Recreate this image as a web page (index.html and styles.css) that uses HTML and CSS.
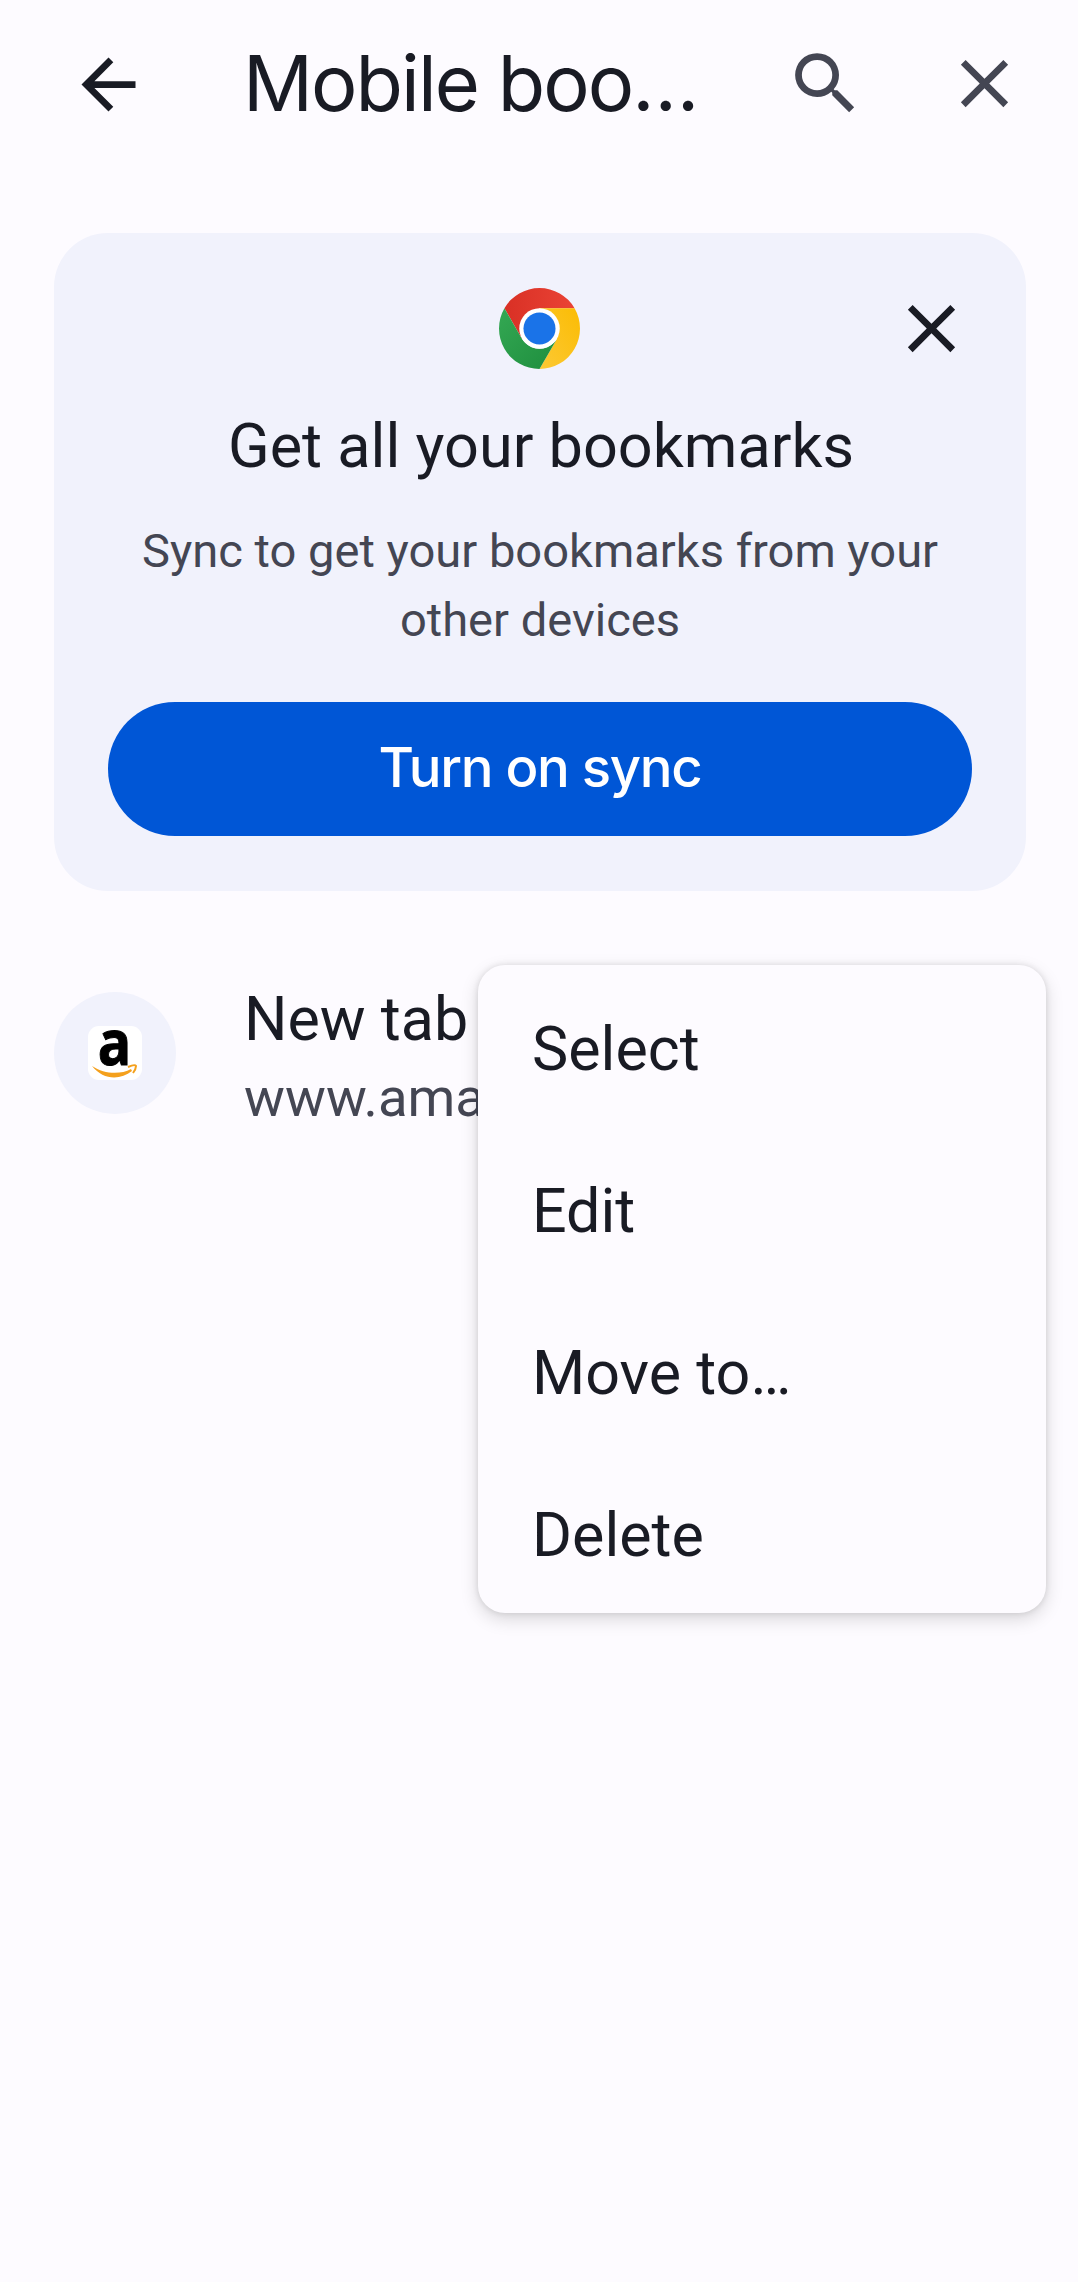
FILE: index.html
```html
<!DOCTYPE html>
<html lang="en">
<head>
<meta charset="utf-8">
<title>Mobile bookmarks</title>
<link rel="stylesheet" href="styles.css">
</head>
<body>
<header class="toolbar">
  <svg class="back" viewBox="0 0 24 24"><path d="M20 11H7.830l5.590-5.590L12 4l-8 8 8 8 1.410-1.410L7.830 13H20z"/></svg>
  <h1>Mobile boo…</h1>
  <svg class="search" viewBox="0 0 24 24"><path d="M15.500 14h-.79l-.28-.27A6.470 6.470 0 0 0 16 9.500A6.500 6.500 0 1 0 9.500 16c1.610 0 3.090-.59 4.230-1.570l.27.28v.79l5 4.990L20.490 19zm-6 0a4.500 4.500 0 1 1 0-9 4.500 4.500 0 0 1 0 9z"/></svg>
  <svg class="close" viewBox="0 0 24 24"><path d="M19 6.410L17.590 5 12 10.590 6.410 5 5 6.410 10.590 12 5 17.590 6.410 19 12 13.410 17.590 19 19 17.590 13.410 12z"/></svg>
</header>
<main>
  <section class="promo">
    <div class="promo-top">
      <svg class="chrome" viewBox="0 0 48 48">
        <defs>
          <linearGradient id="r" x1="0" x2="1"><stop offset="0" stop-color="#d93025"/><stop offset="1" stop-color="#ea4335"/></linearGradient>
          <linearGradient id="y" x1="0" y1="1" x2="1" y2="0"><stop offset="0" stop-color="#fcc934"/><stop offset="1" stop-color="#fbbc04"/></linearGradient>
          <linearGradient id="g" x1="1" y1="1" x2="0" y2="0"><stop offset="0" stop-color="#1e8e3e"/><stop offset="1" stop-color="#34a853"/></linearGradient>
        </defs>
        <path fill="url(#r)" d="M3.220 12A24 24 0 0 1 44.780 12H24L13.610 30z"/>
        <path fill="url(#y)" d="M44.780 12A24 24 0 0 1 24 48L34.390 30 24 12z"/>
        <path fill="url(#g)" d="M3.220 12A24 24 0 0 0 24 48L34.390 30A12 12 0 0 1 13.610 30z"/>
        <circle cx="24" cy="24" r="12" fill="#fff"/><circle cx="24" cy="24" r="9.500" fill="#1a73e8"/>
      </svg>
      <svg class="dismiss" viewBox="0 0 24 24"><path d="M19 6.410L17.590 5 12 10.590 6.410 5 5 6.410 10.590 12 5 17.590 6.410 19 12 13.410 17.590 19 19 17.590 13.410 12z"/></svg>
    </div>
    <h2>Get all your bookmarks</h2>
    <p>Sync to get your bookmarks from your other devices</p>
    <button>Turn on sync</button>
  </section>
  <section class="bookmark">
    <div class="favicon">
      <svg viewBox="0 0 54 54"><rect width="54" height="54" rx="11" fill="#fff"/><text transform="translate(26.500 38.500) scale(.88 1)" text-anchor="middle">a</text><path d="M4 40C16 48 32 49 43 43L44 45C32 54.500 15 54 4 40z" fill="#f4a01c"/><path d="M40 41q7-3 8-1 0 3-3 7" fill="none" stroke="#f4a01c" stroke-width="2"/></svg>
    </div>
    <div class="info"><div class="name">New tab</div><div class="url">www.amazon.com</div></div>
    <nav class="menu"><a>Select</a><a>Edit</a><a>Move to…</a><a>Delete</a></nav>
  </section>
</main>
</body>
</html>
```
FILE: styles.css
```css
* { box-sizing: border-box; }
body { margin: 0; min-height: 2282px; background: #fdfbff; color: #191b24; font-family: Roboto, sans-serif; }
h1, h2, p { margin: 0; font-weight: 400; }
svg { display: block; flex: none; }
.toolbar { display: flex; align-items: center; height: 168px; padding-left: 68px; }
.back { width: 81px; height: 81px; fill: #191b24; }
h1 { width: 480px; margin: -2px 0 0 94px; font-family: Inter, sans-serif; font-size: 77.500px; line-height: 100px; letter-spacing: -1.950px; white-space: nowrap; }
.search, .close { width: 81px; height: 81px; margin-bottom: 1px; fill: #444653; }
.search { margin-left: 62px; }
.close { margin-left: 78px; }
main { padding: 65px 52px 0 54px; }
.promo { height: 658px; padding: 54px; border-radius: 54px; background: #f1f2fc; text-align: center; }
.promo-top { display: grid; grid-template-columns: 1fr 82px 1fr; align-items: center; height: 82px; }
.chrome { grid-column: 2; width: 81px; height: 81px; margin-top: 1px; }
.dismiss { width: 81px; height: 81px; justify-self: end; fill: #191b24; }
h2 { margin: 39px -2px 0 0; font-size: 61.200px; line-height: 76px; }
.promo p { margin-top: 32px; color: #444653; font-size: 47.100px; line-height: 69px; }
button { display: block; width: 100%; height: 134px; margin-top: 48px; padding: 0 0 4px; border: 0; border-radius: 67px; background: #0056d6; color: #fff; font: 500 54.500px Inter, sans-serif; letter-spacing: -1.300px; }
.bookmark { position: relative; display: flex; margin-top: 101px; }
.favicon { display: grid; place-items: center; width: 122px; height: 122px; border-radius: 50%; background: #f1f2fc; }
.favicon svg { width: 54px; height: 54px; overflow: visible; }
.favicon text { font: bold 63px "Open Sans", sans-serif; fill: #000; stroke: #000; stroke-width: 1px; }
.info { margin-left: 68px; }
.name { margin-top: -3px; font-size: 61px; line-height: 60px; }
.url { margin-top: 18px; color: #444653; font-size: 54.500px; line-height: 60px; }
.menu { position: absolute; left: 424px; top: -27px; width: 568px; height: 648px; padding-top: 3px; border-radius: 27px; background: #fdfbff; box-shadow: 0 6px 18px #00000026, 0 0 6px #0000001c; }
.menu a { display: flex; align-items: center; height: 162px; padding-left: 54px; font-size: 61px; }
```
